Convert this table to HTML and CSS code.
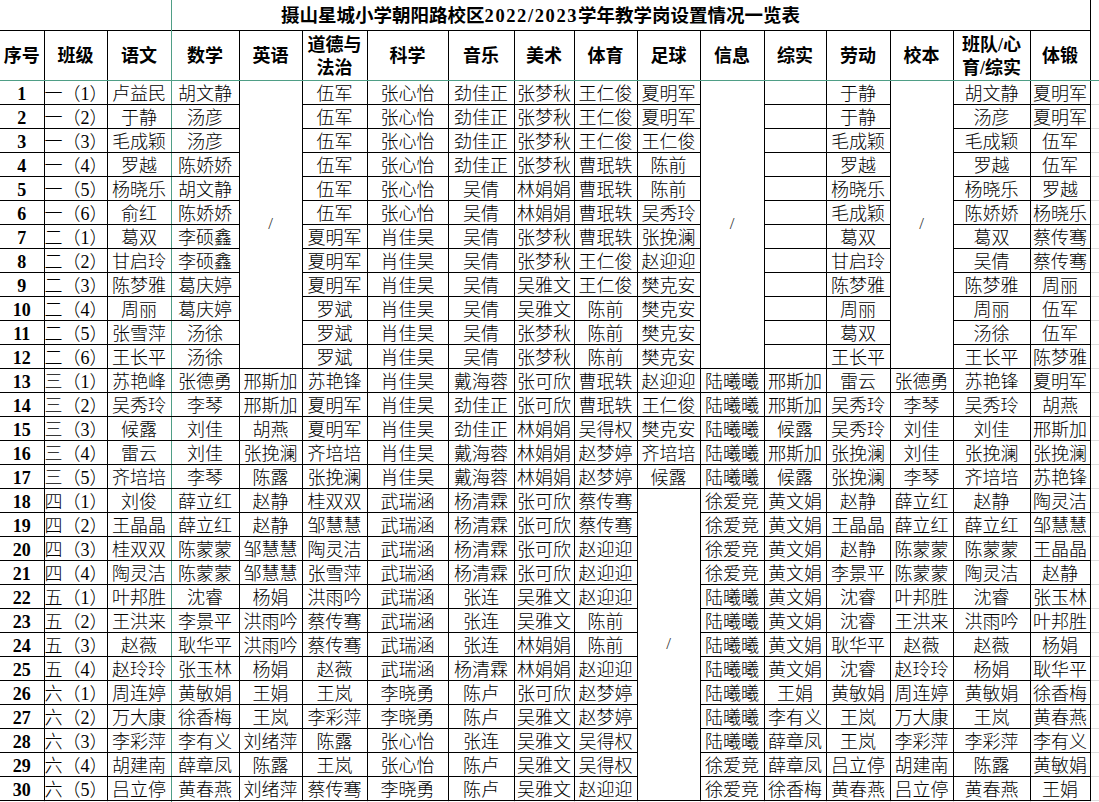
FILE: index.html
```html
<!DOCTYPE html>
<html lang="zh-CN">
<head>
<meta charset="utf-8">
<title>摄山星城小学朝阳路校区2022/2023学年教学岗设置情况一览表</title>
<link rel="stylesheet" href="styles.css">
</head>
<body>
<table class="sheet">
<colgroup>
<col class="c44"><col class="c63"><col class="c64"><col class="c68"><col class="c63"><col class="c65"><col class="c81"><col class="c66"><col class="c60"><col class="c63"><col class="c63"><col class="c64"><col class="c62"><col class="c64"><col class="c63"><col class="c77"><col class="c60"><col class="c40">
</colgroup>
<tr class="trow">
<td class="tl" colspan="3"></td>
<td class="title" colspan="14">摄山星城小学朝阳路校区<span class="yr">2022/2023</span>学年教学岗设置情况一览表</td>
<td class="gx0"></td>
</tr>
<tr class="hd">
<td>序号</td><td>班级</td><td>语文</td><td>数学</td><td>英语</td><td>道德与<br>法治</td><td>科学</td><td>音乐</td><td>美术</td><td>体育</td><td>足球</td><td>信息</td><td>综实</td><td>劳动</td><td>校本</td><td>班队/心<br>育/综实</td><td>体锻</td><td class="gx"></td>
</tr>
<tr class="r"><td class="no">1</td><td class="cls">一（1）</td><td>卢益民</td><td>胡文静</td><td class="na" rowspan="12">/</td><td>伍军</td><td>张心怡</td><td>劲佳正</td><td>张梦秋</td><td>王仁俊</td><td>夏明军</td><td class="na" rowspan="12">/</td><td></td><td>于静</td><td class="na" rowspan="12">/</td><td>胡文静</td><td>夏明军</td><td class="gx"></td></tr>
<tr class="r"><td class="no">2</td><td class="cls">一（2）</td><td>于静</td><td>汤彦</td><td>伍军</td><td>张心怡</td><td>劲佳正</td><td>张梦秋</td><td>王仁俊</td><td>夏明军</td><td></td><td>于静</td><td>汤彦</td><td>夏明军</td><td class="gx"></td></tr>
<tr class="r"><td class="no">3</td><td class="cls">一（3）</td><td>毛成颖</td><td>汤彦</td><td>伍军</td><td>张心怡</td><td>劲佳正</td><td>张梦秋</td><td>王仁俊</td><td>王仁俊</td><td></td><td>毛成颖</td><td>毛成颖</td><td>伍军</td><td class="gx"></td></tr>
<tr class="r"><td class="no">4</td><td class="cls">一（4）</td><td>罗越</td><td>陈娇娇</td><td>伍军</td><td>张心怡</td><td>劲佳正</td><td>张梦秋</td><td>曹珉轶</td><td>陈前</td><td></td><td>罗越</td><td>罗越</td><td>伍军</td><td class="gx"></td></tr>
<tr class="r"><td class="no">5</td><td class="cls">一（5）</td><td>杨晓乐</td><td>胡文静</td><td>伍军</td><td>张心怡</td><td>吴倩</td><td>林娟娟</td><td>曹珉轶</td><td>陈前</td><td></td><td>杨晓乐</td><td>杨晓乐</td><td>罗越</td><td class="gx"></td></tr>
<tr class="r"><td class="no">6</td><td class="cls">一（6）</td><td>俞红</td><td>陈娇娇</td><td>伍军</td><td>张心怡</td><td>吴倩</td><td>林娟娟</td><td>曹珉轶</td><td>吴秀玲</td><td></td><td>毛成颖</td><td>陈娇娇</td><td>杨晓乐</td><td class="gx"></td></tr>
<tr class="r"><td class="no">7</td><td class="cls">二（1）</td><td>葛双</td><td>李硕鑫</td><td>夏明军</td><td>肖佳昊</td><td>吴倩</td><td>张梦秋</td><td>曹珉轶</td><td>张挽澜</td><td></td><td>葛双</td><td>葛双</td><td>蔡传骞</td><td class="gx"></td></tr>
<tr class="r"><td class="no">8</td><td class="cls">二（2）</td><td>甘启玲</td><td>李硕鑫</td><td>夏明军</td><td>肖佳昊</td><td>吴倩</td><td>张梦秋</td><td>王仁俊</td><td>赵迎迎</td><td></td><td>甘启玲</td><td>吴倩</td><td>蔡传骞</td><td class="gx"></td></tr>
<tr class="r"><td class="no">9</td><td class="cls">二（3）</td><td>陈梦雅</td><td>葛庆婷</td><td>夏明军</td><td>肖佳昊</td><td>吴倩</td><td>吴雅文</td><td>王仁俊</td><td>樊克安</td><td></td><td>陈梦雅</td><td>陈梦雅</td><td>周丽</td><td class="gx"></td></tr>
<tr class="r"><td class="no">10</td><td class="cls">二（4）</td><td>周丽</td><td>葛庆婷</td><td>罗斌</td><td>肖佳昊</td><td>吴倩</td><td>吴雅文</td><td>陈前</td><td>樊克安</td><td></td><td>周丽</td><td>周丽</td><td>伍军</td><td class="gx"></td></tr>
<tr class="r"><td class="no">11</td><td class="cls">二（5）</td><td>张雪萍</td><td>汤徐</td><td>罗斌</td><td>肖佳昊</td><td>吴倩</td><td>张梦秋</td><td>陈前</td><td>樊克安</td><td></td><td>葛双</td><td>汤徐</td><td>伍军</td><td class="gx"></td></tr>
<tr class="r"><td class="no">12</td><td class="cls">二（6）</td><td>王长平</td><td>汤徐</td><td>罗斌</td><td>肖佳昊</td><td>吴倩</td><td>张梦秋</td><td>陈前</td><td>樊克安</td><td></td><td>王长平</td><td>王长平</td><td>陈梦雅</td><td class="gx"></td></tr>
<tr class="r"><td class="no">13</td><td class="cls">三（1）</td><td>苏艳峰</td><td>张德勇</td><td>邢斯加</td><td>苏艳锋</td><td>肖佳昊</td><td>戴海蓉</td><td>张可欣</td><td>曹珉轶</td><td>赵迎迎</td><td>陆曦曦</td><td>邢斯加</td><td>雷云</td><td>张德勇</td><td>苏艳锋</td><td>夏明军</td><td class="gx"></td></tr>
<tr class="r"><td class="no">14</td><td class="cls">三（2）</td><td>吴秀玲</td><td>李琴</td><td>邢斯加</td><td>夏明军</td><td>肖佳昊</td><td>劲佳正</td><td>张可欣</td><td>曹珉轶</td><td>王仁俊</td><td>陆曦曦</td><td>邢斯加</td><td>吴秀玲</td><td>李琴</td><td>吴秀玲</td><td>胡燕</td><td class="gx"></td></tr>
<tr class="r"><td class="no">15</td><td class="cls">三（3）</td><td>候露</td><td>刘佳</td><td>胡燕</td><td>夏明军</td><td>肖佳昊</td><td>劲佳正</td><td>林娟娟</td><td>吴得权</td><td>樊克安</td><td>陆曦曦</td><td>候露</td><td>吴秀玲</td><td>刘佳</td><td>刘佳</td><td>邢斯加</td><td class="gx"></td></tr>
<tr class="r"><td class="no">16</td><td class="cls">三（4）</td><td>雷云</td><td>刘佳</td><td>张挽澜</td><td>齐培培</td><td>肖佳昊</td><td>戴海蓉</td><td>林娟娟</td><td>赵梦婷</td><td>齐培培</td><td>陆曦曦</td><td>邢斯加</td><td>张挽澜</td><td>刘佳</td><td>张挽澜</td><td>张挽澜</td><td class="gx"></td></tr>
<tr class="r"><td class="no">17</td><td class="cls">三（5）</td><td>齐培培</td><td>李琴</td><td>陈露</td><td>张挽澜</td><td>肖佳昊</td><td>戴海蓉</td><td>林娟娟</td><td>赵梦婷</td><td>候露</td><td>陆曦曦</td><td>候露</td><td>张挽澜</td><td>李琴</td><td>齐培培</td><td>苏艳锋</td><td class="gx"></td></tr>
<tr class="r"><td class="no">18</td><td class="cls">四（1）</td><td>刘俊</td><td>薛立红</td><td>赵静</td><td>桂双双</td><td>武瑞涵</td><td>杨清霖</td><td>张可欣</td><td>蔡传骞</td><td class="na" rowspan="13">/</td><td>徐爱竞</td><td>黄文娟</td><td>赵静</td><td>薛立红</td><td>赵静</td><td>陶灵洁</td><td class="gx"></td></tr>
<tr class="r"><td class="no">19</td><td class="cls">四（2）</td><td>王晶晶</td><td>薛立红</td><td>赵静</td><td>邹慧慧</td><td>武瑞涵</td><td>杨清霖</td><td>张可欣</td><td>蔡传骞</td><td>徐爱竞</td><td>黄文娟</td><td>王晶晶</td><td>薛立红</td><td>薛立红</td><td>邹慧慧</td><td class="gx"></td></tr>
<tr class="r"><td class="no">20</td><td class="cls">四（3）</td><td>桂双双</td><td>陈蒙蒙</td><td>邹慧慧</td><td>陶灵洁</td><td>武瑞涵</td><td>杨清霖</td><td>张可欣</td><td>赵迎迎</td><td>徐爱竞</td><td>黄文娟</td><td>赵静</td><td>陈蒙蒙</td><td>陈蒙蒙</td><td>王晶晶</td><td class="gx"></td></tr>
<tr class="r"><td class="no">21</td><td class="cls">四（4）</td><td>陶灵洁</td><td>陈蒙蒙</td><td>邹慧慧</td><td>张雪萍</td><td>武瑞涵</td><td>杨清霖</td><td>张可欣</td><td>赵迎迎</td><td>徐爱竞</td><td>黄文娟</td><td>李景平</td><td>陈蒙蒙</td><td>陶灵洁</td><td>赵静</td><td class="gx"></td></tr>
<tr class="r"><td class="no">22</td><td class="cls">五（1）</td><td>叶邦胜</td><td>沈睿</td><td>杨娟</td><td>洪雨吟</td><td>武瑞涵</td><td>张连</td><td>吴雅文</td><td>赵迎迎</td><td>陆曦曦</td><td>黄文娟</td><td>沈睿</td><td>叶邦胜</td><td>沈睿</td><td>张玉林</td><td class="gx"></td></tr>
<tr class="r"><td class="no">23</td><td class="cls">五（2）</td><td>王洪来</td><td>李景平</td><td>洪雨吟</td><td>蔡传骞</td><td>武瑞涵</td><td>张连</td><td>吴雅文</td><td>陈前</td><td>陆曦曦</td><td>黄文娟</td><td>沈睿</td><td>王洪来</td><td>洪雨吟</td><td>叶邦胜</td><td class="gx"></td></tr>
<tr class="r"><td class="no">24</td><td class="cls">五（3）</td><td>赵薇</td><td>耿华平</td><td>洪雨吟</td><td>蔡传骞</td><td>武瑞涵</td><td>张连</td><td>林娟娟</td><td>陈前</td><td>陆曦曦</td><td>黄文娟</td><td>耿华平</td><td>赵薇</td><td>赵薇</td><td>杨娟</td><td class="gx"></td></tr>
<tr class="r"><td class="no">25</td><td class="cls">五（4）</td><td>赵玲玲</td><td>张玉林</td><td>杨娟</td><td>赵薇</td><td>武瑞涵</td><td>杨清霖</td><td>林娟娟</td><td>赵迎迎</td><td>陆曦曦</td><td>黄文娟</td><td>沈睿</td><td>赵玲玲</td><td>杨娟</td><td>耿华平</td><td class="gx"></td></tr>
<tr class="r"><td class="no">26</td><td class="cls">六（1）</td><td>周连婷</td><td>黄敏娟</td><td>王娟</td><td>王岚</td><td>李晓勇</td><td>陈卢</td><td>张可欣</td><td>赵梦婷</td><td>陆曦曦</td><td>王娟</td><td>黄敏娟</td><td>周连婷</td><td>黄敏娟</td><td>徐香梅</td><td class="gx"></td></tr>
<tr class="r"><td class="no">27</td><td class="cls">六（2）</td><td>万大康</td><td>徐香梅</td><td>王岚</td><td>李彩萍</td><td>李晓勇</td><td>陈卢</td><td>吴雅文</td><td>赵梦婷</td><td>陆曦曦</td><td>李有义</td><td>王岚</td><td>万大康</td><td>王岚</td><td>黄春燕</td><td class="gx"></td></tr>
<tr class="r"><td class="no">28</td><td class="cls">六（3）</td><td>李彩萍</td><td>李有义</td><td>刘绪萍</td><td>陈露</td><td>张心怡</td><td>张连</td><td>吴雅文</td><td>吴得权</td><td>陆曦曦</td><td>薛章凤</td><td>王岚</td><td>李彩萍</td><td>李彩萍</td><td>李有义</td><td class="gx"></td></tr>
<tr class="r"><td class="no">29</td><td class="cls">六（4）</td><td>胡建南</td><td>薛章凤</td><td>陈露</td><td>王岚</td><td>张心怡</td><td>陈卢</td><td>吴雅文</td><td>吴得权</td><td>徐爱竞</td><td>薛章凤</td><td>吕立停</td><td>胡建南</td><td>陈露</td><td>黄敏娟</td><td class="gx"></td></tr>
<tr class="r"><td class="no">30</td><td class="cls">六（5）</td><td>吕立停</td><td>黄春燕</td><td>刘绪萍</td><td>蔡传骞</td><td>李晓勇</td><td>陈卢</td><td>吴雅文</td><td>赵迎迎</td><td>徐爱竞</td><td>徐香梅</td><td>黄春燕</td><td>吕立停</td><td>黄春燕</td><td>王娟</td><td class="gx"></td></tr>
<tr class="gend"><td></td><td></td><td></td><td></td><td></td><td></td><td></td><td></td><td></td><td></td><td></td><td></td><td></td><td></td><td></td><td></td><td></td><td></td></tr>
</table>
</body>
</html>
```
FILE: styles.css
```css
html, body {
  margin: 0;
  padding: 0;
  overflow: hidden;
  background: #ffffff;
}

.sheet {
  border-collapse: collapse;
  table-layout: fixed;
  width: 1130px;
  font-family: "Liberation Serif", "Noto Sans CJK SC", serif;
  color: #000;
}

.c44 { width: 44px; }
.c60 { width: 60px; }
.c62 { width: 62px; }
.c63 { width: 63px; }
.c64 { width: 64px; }
.c65 { width: 65px; }
.c66 { width: 66px; }
.c68 { width: 68px; }
.c77 { width: 77px; }
.c81 { width: 81px; }
.c40 { width: 40px; }

.sheet td {
  border: 1px solid #000;
  padding: 0;
  text-align: center;
  white-space: nowrap;
  overflow: visible;
}

/* title row */
.trow { height: 30px; }
.trow td { border: none; }
.trow .tl { border-right: 1px solid #4f9e86; }
.trow .title {
  border-right: 1px solid #000;
  font-size: 18.5px;
  font-weight: bold;
  line-height: 24px;
  vertical-align: bottom;
  padding: 0 180px 2px 0;
}
.yr { letter-spacing: 1.6px; }

/* header row */
.hd { height: 48px; }
.hd td {
  font-size: 18px;
  font-weight: bold;
  line-height: 23px;
  vertical-align: middle;
  padding-top: 3px;
  border-bottom: 1px solid #4f9e86;
}
.hd td:first-child { border-left: none; }
.hd td:nth-child(3) { border-right: 1px solid #4f9e86; }

/* data rows */
.r { height: 24px; }
.r td {
  font-size: 18px;
  line-height: 20px;
  vertical-align: bottom;
  font-weight: 300;
}
.r td:first-child { border-left: none; }
.r td:nth-child(3) { border-right: 1px solid #4f9e86; }

.r .no {
  font-weight: bold;
}
.r .cls {
  text-align: left;
  overflow: visible;
}
.r .na {
  vertical-align: middle;
  color: #333;
  font-size: 17px;
}

/* gridline filler beyond the table */
.sheet td.gx0 { border: none; }
.sheet .r td.gx {
  border: none;
  border-bottom: 1px solid #dcdcdc;
}
.sheet .hd td.gx {
  border: none;
  border-bottom: 1px solid #4f9e86;
}

.gend { height: 10px; }
.gend td {
  border: none;
  border-right: 1px solid #dcdcdc;
}
.gend td:nth-child(3) { border-right: 1px solid #4f9e86; }
```
